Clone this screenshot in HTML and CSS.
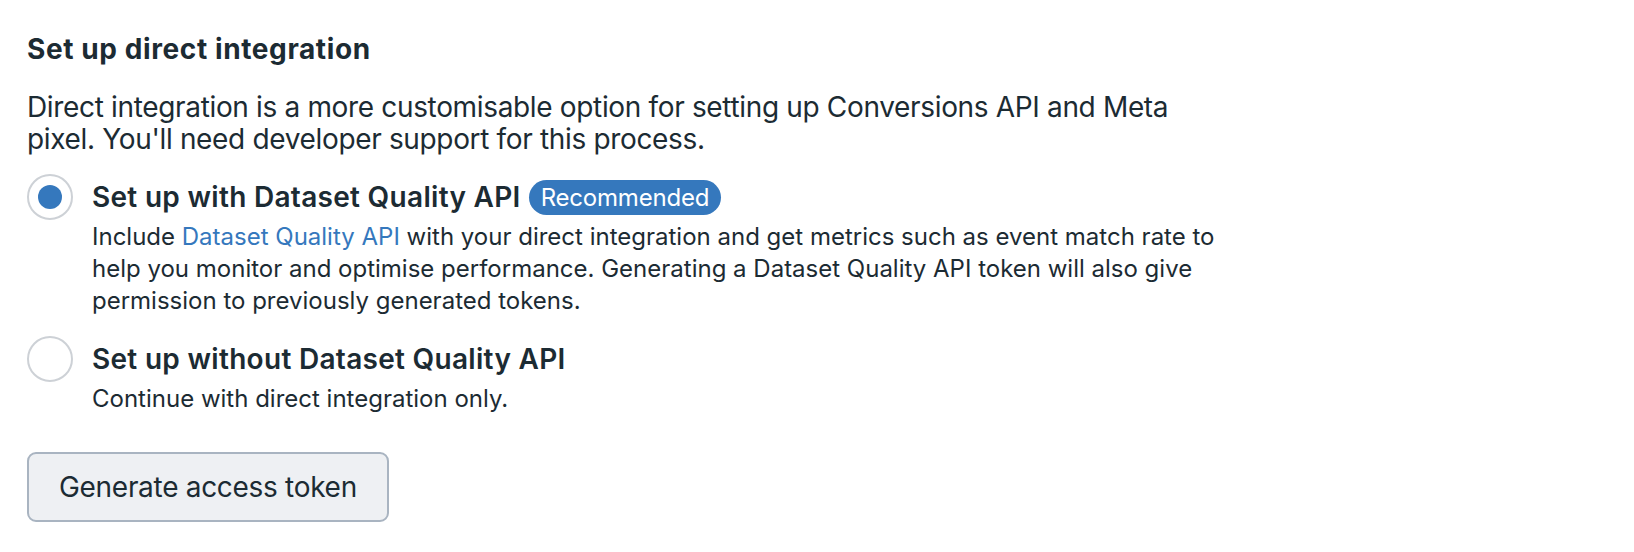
FILE: index.html
```html
<!DOCTYPE html>
<html lang="en">
<head>
<meta charset="utf-8">
<title>Set up direct integration</title>
<link rel="stylesheet" href="styles.css">
</head>
<body>
<main class="section">
  <h2 class="section-title">Set up direct integration</h2>
  <p class="intro">Direct integration is a more customisable option for setting up Conversions API and Meta pixel. You'll need developer support for this process.</p>
  <div class="options">
    <label class="option">
      <span class="radio is-checked"><span class="radio-dot"></span></span>
      <span class="option-head">
        <span class="option-title">Set up with Dataset Quality API</span>
        <span class="badge">Recommended</span>
      </span>
      <span class="option-desc">Include <a class="link" href="#">Dataset Quality API</a> with your direct integration and get metrics such as event match rate to help you monitor and optimise performance. Generating a Dataset Quality API token will also give permission to previously generated tokens.</span>
    </label>
    <label class="option">
      <span class="radio"></span>
      <span class="option-head">
        <span class="option-title">Set up without Dataset Quality API</span>
      </span>
      <span class="option-desc">Continue with direct integration only.</span>
    </label>
  </div>
  <button class="btn" type="button">Generate access token</button>
</main>
</body>
</html>
```
FILE: styles.css
```css
* { box-sizing: border-box; }

html, body {
  margin: 0;
  background: #ffffff;
}

body {
  font-family: Inter, "Noto Sans", "Liberation Sans", sans-serif;
  color: #1c2b33;
}

.section {
  width: 1227px;
  padding: 33px 0 0 27px;
  display: flex;
  flex-direction: column;
  align-items: flex-start;
}

.section-title {
  margin: 0 0 26px;
  font-size: 28px;
  line-height: 32px;
  font-weight: 700;
  letter-spacing: 0.6px;
}

.intro {
  margin: 0;
  font-size: 28px;
  line-height: 32px;
  font-weight: 400;
  letter-spacing: -0.34px;
}

.options {
  margin-top: 19px;
  display: flex;
  flex-direction: column;
  gap: 19px;
  width: 100%;
}

.option {
  display: grid;
  grid-template-columns: 46px 1fr;
  column-gap: 19px;
  align-items: center;
  cursor: pointer;
}

.radio {
  grid-column: 1;
  grid-row: 1;
  width: 46px;
  height: 46px;
  border: 2px solid #cdd1d6;
  border-radius: 50%;
  display: flex;
  align-items: center;
  justify-content: center;
  background: #ffffff;
}

.radio-dot {
  width: 24px;
  height: 24px;
  border-radius: 50%;
  background: #3578bd;
}

.option-head {
  grid-column: 2;
  grid-row: 1;
  display: flex;
  align-items: center;
  gap: 8px;
}

.option-title {
  font-size: 28px;
  line-height: 32px;
  font-weight: 600;
  letter-spacing: 0.3px;
}

.badge {
  display: inline-flex;
  align-items: center;
  height: 35px;
  padding: 0 12px;
  border-radius: 18px;
  background: #3578bd;
  color: #ffffff;
  font-size: 24px;
  line-height: 35px;
  font-weight: 400;
  letter-spacing: -0.2px;
}

.option-desc {
  grid-column: 2;
  grid-row: 2;
  margin-top: 1px;
  font-size: 24px;
  line-height: 32px;
  letter-spacing: 0;
}

.link {
  color: #3578bd;
  text-decoration: none;
}

.btn {
  margin-top: 37px;
  height: 70px;
  padding: 0 30px;
  border: 2px solid #a9b4c1;
  border-radius: 9px;
  background: #eef0f3;
  color: #1c2b33;
  font-family: inherit;
  font-size: 28px;
  line-height: 32px;
  font-weight: 400;
  letter-spacing: -0.3px;
  cursor: pointer;
}
```
